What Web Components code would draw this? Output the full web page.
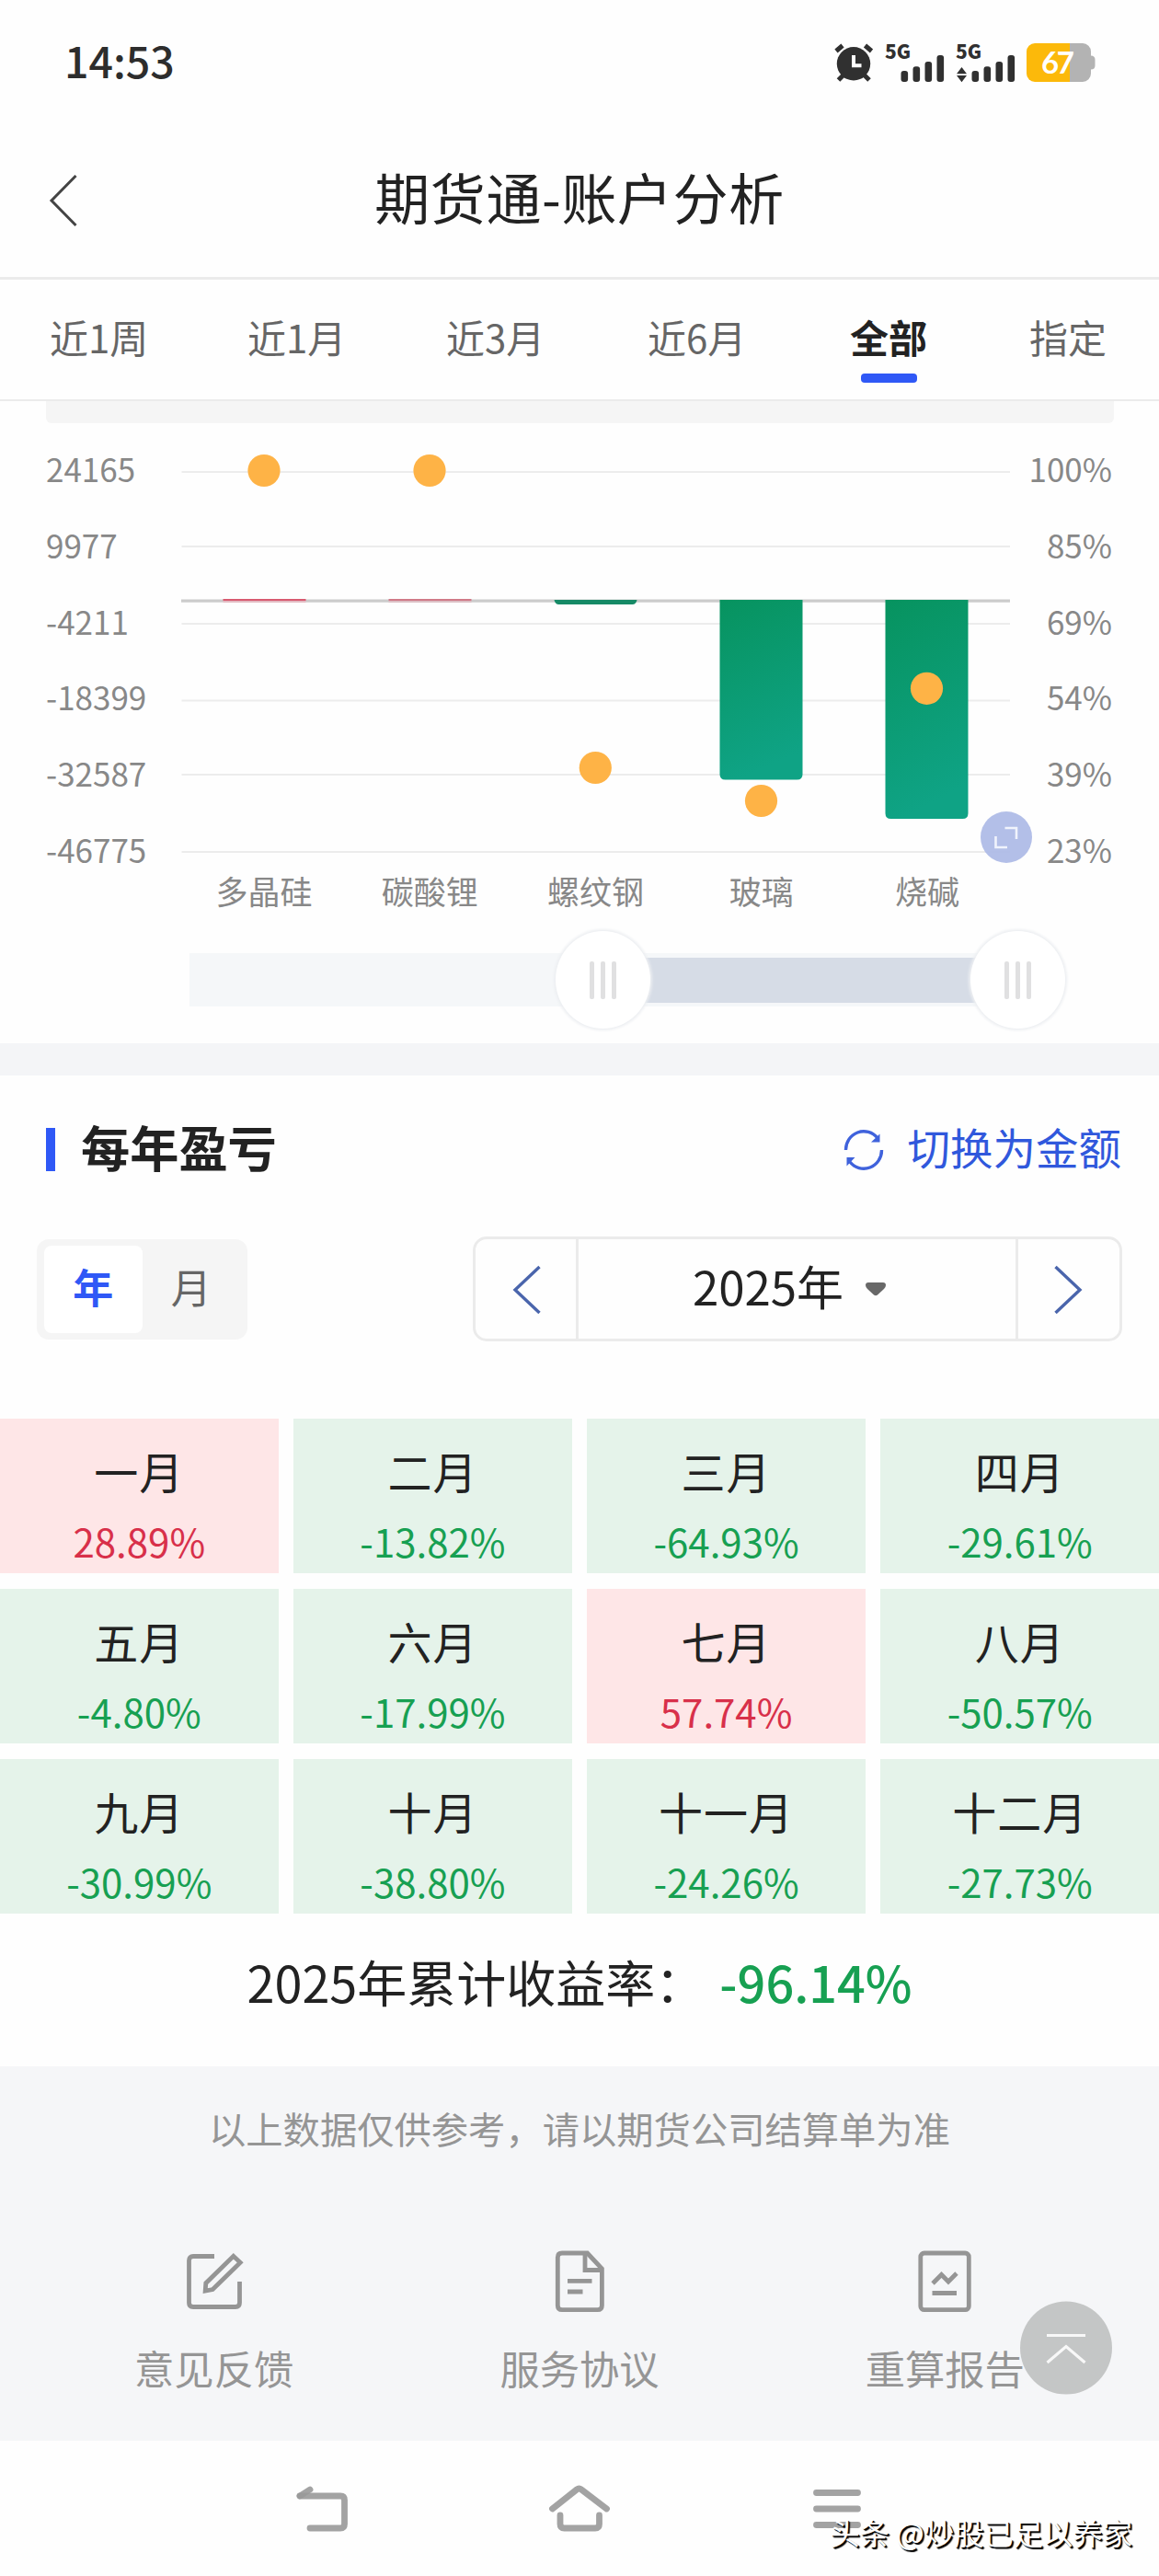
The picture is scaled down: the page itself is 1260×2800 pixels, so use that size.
<!DOCTYPE html>
<html lang="zh-CN">
<head>
<meta charset="UTF-8">
<title>期货通-账户分析</title>
<style>
  body {
    margin: 0;
    width: 1260px;
    background: #fefefe;
    color: #222;
    font-family: "Noto Sans CJK SC", sans-serif;
  }
</style>
</head>
<body>
<status-bar time="14:53"></status-bar>
<page-header>期货通-账户分析</page-header>
<range-tabs items="近1周,近1月,近3月,近6月,全部,指定" active="全部"></range-tabs>
<profit-chart></profit-chart>
<section-title action="切换为金额">每年盈亏</section-title>
<period-picker year="2025年"></period-picker>
<month-grid></month-grid>
<year-total value="-96.14%">2025年累计收益率：</year-total>
<page-footer>以上数据仅供参考，请以期货公司结算单为准</page-footer>
<nav-bar>头条 @炒股已足以养家</nav-bar>

<script>
class StatusBar extends HTMLElement {
  connectedCallback() {
    this.attachShadow({ mode: 'open' });
    this.shadowRoot.innerHTML = `
      <style>
        :host {
          display: flex;
          justify-content: space-between;
          align-items: center;
          height: 134px;
          padding: 0 65px 0 70px;
        }
        .time {
          font-size: 46.500px;
          font-weight: 500;
          line-height: 60px;
          padding-bottom: 4px;
          color: #2d2d2d;
        }
        svg { display: block; margin-top: 4px; }
      </style>
      <span class="time">${this.getAttribute('time')}</span>
      <svg width="290" height="70" viewBox="905 34 290 70" fill="#303030">
        <circle cx="928" cy="69.3" r="18.2"/>
        <path d="M909 55.5l7-6M947.5 55.5l-7-6M911.500 87l7-7M945 87l-7-7" stroke="#303030" stroke-width="5"/>
        <path d="M928 60v11.200h8.500" fill="none" stroke="#fff" stroke-width="4"/>
        <g font-family="Noto Sans CJK SC, sans-serif" font-weight="900" font-size="21">
          <text x="962" y="63.500">5G</text>
          <text x="1039" y="63.500">5G</text>
        </g>
        <g id="bars">
          <rect x="979.500" y="77" width="7.600" height="12" rx="3"/>
          <rect x="992.500" y="72.300" width="7.600" height="16.700" rx="3"/>
          <rect x="1005.500" y="67" width="7.600" height="22" rx="3"/>
          <rect x="1018.500" y="60" width="7.600" height="29" rx="3"/>
        </g>
        <use href="#bars" x="77"/>
        <path d="M1040 80.300h11l-5.500-7.300zM1040 82h11l-5.500 7.300z"/>
        <path d="M1163 47h14a9 9 0 0 1 9 9v4.500q4.500 0 4.500 4.500v6q0 4.500-4.500 4.500v4.500a9 9 0 0 1-9 9h-14z" fill="#b3b3b3"/>
        <path d="M1163 47h-38a9 9 0 0 0-9 9v24a9 9 0 0 0 9 9h38z" fill="#fcb90a"/>
        <text x="1132" y="80" font-family="Lato, sans-serif" font-weight="700" font-size="33" textLength="36" fill="#fff">67</text>
      </svg>
    `;
  }
}

class PageHeader extends HTMLElement {
  connectedCallback() {
    this.attachShadow({ mode: 'open' });
    this.shadowRoot.innerHTML = `
      <style>
        :host {
          display: grid;
          grid-template-columns: 100px 1fr 100px;
          align-items: center;
          height: 167px;
          border-bottom: 3px solid #ebebeb;
        }
        svg { margin-left: 50px; }
        h1 {
          margin: 0;
          padding-bottom: 9px;
          text-align: center;
          font-size: 60px;
          font-weight: 400;
          letter-spacing: .6px;
          line-height: 80px;
        }
      </style>
      <svg width="40" height="60" fill="none" stroke="#444" stroke-width="3"><path d="M32.500 3L6 30l26.500 27"/></svg>
      <h1><slot></slot></h1>
    `;
  }
}

class RangeTabs extends HTMLElement {
  connectedCallback() {
    const active = this.getAttribute('active');
    const items = this.getAttribute('items').split(',');
    this.attachShadow({ mode: 'open' });
    this.shadowRoot.innerHTML = `
      <style>
        :host {
          display: grid;
          grid-template-columns: 215px 216px 219px 220px 195px auto;
          justify-items: start;
          height: 130px;
          padding-left: 54px;
          border-bottom: 2px solid #ebebeb;
        }
        .tab {
          display: flex;
          flex-direction: column;
          align-items: center;
          font-size: 42px;
          line-height: 60px;
          padding-top: 32px;
          color: #666;
        }
        .tab.active { color: #222; font-weight: 700; }
        .tab.active::after {
          content: "";
          width: 61px;
          height: 10px;
          margin-top: 10px;
          border-radius: 4px;
          background: #2f58f6;
        }
      </style>
      ${items.map(t => `<span class="tab ${t === active ? 'active' : ''}">${t}</span>`).join('')}
    `;
  }
}

class ProfitChart extends HTMLElement {
  connectedCallback() {
    const left = ['24165', '9977', '-4211', '-18399', '-32587', '-46775'];
    const right = ['100%', '85%', '69%', '54%', '39%', '23%'];
    const names = ['多晶硅', '碳酸锂', '螺纹钢', '玻璃', '烧碱'];
    const lines = [21, 102, 186, 269.5, 350, 434];
    const dots = [[90, 19.5], [270, 19.5], [450.3, 342.5], [630.5, 378.5], [810.500, 256.3]];
    this.attachShadow({ mode: 'open' });
    this.shadowRoot.innerHTML = `
      <style>
        :host {
          display: block;
          position: relative;
          height: 698px;
          border-bottom: 35px solid #f4f5f7;
          color: #888;
          font-size: 35px;
        }
        .band {
          height: 24px;
          margin: 0 49px 0 50px;
          background: #f5f5f5;
          border-radius: 0 0 6px 6px;
        }
        .plot {
          display: grid;
          grid-template-columns: 147px 901px 111px;
          height: 454px;
          margin: 32px 0 0 50px;
        }
        .axis {
          display: flex;
          flex-direction: column;
          justify-content: space-between;
          line-height: 40px;
          margin: -3px 0 3px;
        }
        .axis.right { text-align: right; }
        .names {
          display: grid;
          grid-template-columns: repeat(5, 1fr);
          width: 901px;
          margin-left: 197px;
          text-align: center;
          line-height: 44px;
        }
        .zoom {
          display: flex;
          align-items: center;
          position: relative;
          width: 900px;
          height: 58px;
          margin: 46px 0 0 206px;
          background: #f5f7f9;
        }
        .selected {
          width: 451px;
          height: 49px;
          margin-left: 449px;
          background: #d6dce6;
        }
        .handle {
          position: absolute;
          top: -24px;
          display: flex;
          justify-content: center;
          align-items: center;
          gap: 7px;
          width: 103px;
          height: 106px;
          border-radius: 50%;
          background: #fff;
          box-shadow: 0 0 3px 2px #edeff2;
        }
        .handle i { width: 5px; height: 41px; border-radius: 2px; background: #e0e0e1; }
        .expand {
          position: absolute;
          left: 1066px;
          top: 446px;
        }
      </style>
      <div class="band"></div>
      <div class="plot">
        <div class="axis">${left.map(t => `<span>${t}</span>`).join('')}</div>
        <svg width="901" height="454">
          <defs>
            <linearGradient id="down" x1="0" y1="0" x2="0.2" y2="1">
              <stop offset="0" stop-color="#07935f"/>
              <stop offset="1" stop-color="#0fa385"/>
            </linearGradient>
          </defs>
          ${lines.map(y => `<path d="M0.500 ${y}H901" stroke="#ececec" stroke-width="1.8"/>`).join('')}
          <path d="M0 161.200H901" stroke="#ccc" stroke-width="3.2"/>
          <rect x="45.500" y="159" width="90" height="2" fill="#d85a70"/>
          <rect x="225.500" y="159" width="90" height="2" fill="#d07a88"/>
          <rect x="45.500" y="161" width="90" height="2" fill="#e3bcc3"/>
          <rect x="225.500" y="161" width="90" height="2" fill="#dcc0c5"/>
          <path d="M405.500 160h90q-1 5-5 5h-80q-4 0-5-5z" fill="#168a66"/>
          <path d="M585.500 160h90v189.500q0 6-6 6h-78q-6 0-6-6z" fill="url(#down)"/>
          <path d="M765.500 160h90v232q0 6-6 6h-78q-6 0-6-6z" fill="url(#down)"/>
          ${dots.map(d => `<circle cx="${d[0]}" cy="${d[1]}" r="17.600" fill="#feb346"/>`).join('')}
        </svg>
        <div class="axis right">${right.map(t => `<span>${t}</span>`).join('')}</div>
      </div>
      <div class="names">${names.map(t => `<span>${t}</span>`).join('')}</div>
      <div class="zoom">
        <div class="selected"></div>
        <div class="handle" style="left: 398px"><i></i><i></i><i></i></div>
        <div class="handle" style="left: 849px"><i></i><i></i><i></i></div>
      </div>
      <svg class="expand" width="56" height="56">
        <circle cx="28" cy="28" r="28" fill="#adbae6" opacity=".92"/>
        <path d="M26.500 18H39v12M16.500 27v12H29" fill="none" stroke="#f0f3fc" stroke-width="2.600"/>
      </svg>
    `;
  }
}

class SectionTitle extends HTMLElement {
  connectedCallback() {
    this.attachShadow({ mode: 'open' });
    this.shadowRoot.innerHTML = `
      <style>
        :host {
          display: flex;
          align-items: center;
          height: 161px;
          padding: 0 41px 0 50px;
        }
        .mark { width: 10px; height: 47px; background: #2f58f6; }
        h2 {
          flex: 1;
          margin: 0 0 0 28px;
          padding-bottom: 8px;
          font-size: 53.200px;
          line-height: 70px;
        }
        .action {
          padding-bottom: 8px;
          margin-left: 25px;
          font-size: 46.500px;
          line-height: 60px;
          color: #3058dc;
        }
      </style>
      <span class="mark"></span>
      <h2><slot></slot></h2>
      <svg width="46" height="48" viewBox="915 1226 46 48" fill="none" stroke="#3f62dc" stroke-width="3.400">
        <path d="M918.500 1250A19.500 20 0 0 1 953 1237M957.500 1250A19.500 20 0 0 1 923 1263"/>
        <path d="M955.500 1232.500v9h-9.500zM919.500 1267.500v-9.500h9z" fill="#3f62dc" stroke="none"/>
      </svg>
      <span class="action">${this.getAttribute('action')}</span>
    `;
  }
}

class PeriodPicker extends HTMLElement {
  connectedCallback() {
    this.attachShadow({ mode: 'open' });
    this.shadowRoot.innerHTML = `
      <style>
        :host {
          display: flex;
          justify-content: space-between;
          align-items: center;
          height: 114px;
          padding: 14px 40px 84px;
        }
        .toggle {
          display: flex;
          box-sizing: border-box;
          width: 229px;
          height: 109px;
          padding: 7px 8px;
          border-radius: 13px;
          background: #f5f5f5;
          font-size: 44px;
          line-height: 88px;
          text-align: center;
          color: #666;
        }
        .toggle span { flex: 1; }
        .toggle .on {
          background: #fff;
          border-radius: 8px;
          font-weight: 700;
          color: #2f58f6;
        }
        .picker {
          display: grid;
          grid-template-columns: 109px 1fr 110px;
          box-sizing: border-box;
          width: 706px;
          height: 114px;
          border: 3px solid #ebebeb;
          border-radius: 15px;
        }
        .picker > * {
          display: flex;
          justify-content: center;
          align-items: center;
        }
        .year {
          gap: 24px;
          padding-right: 17px;
          border: solid #ebebeb;
          border-width: 0 3px;
          font-size: 51px;
        }
        .year span { line-height: 60px; padding-bottom: 8px; }
        .arrow svg { fill: none; stroke: #4a65ac; stroke-width: 3.400; }
      </style>
      <div class="toggle"><span class="on">年</span><span>月</span></div>
      <div class="picker">
        <div class="arrow"><svg width="32" height="54"><path d="M30.500 3L4 28l26.500 25"/></svg></div>
        <div class="year">
          <span>${this.getAttribute('year')}</span>
          <svg width="22" height="16"><path d="M3 1h16q3 0 3 3 0 2-2 4l-7 6.500q-2 1.500-4 0L2 8Q0 6 0 4q0-3 3-3z" fill="#686868"/></svg>
        </div>
        <div class="arrow"><svg width="32" height="54"><path d="M1.500 3L28 28 1.500 53"/></svg></div>
      </div>
    `;
  }
}

class MonthGrid extends HTMLElement {
  connectedCallback() {
    const months = [
      ['一月', '28.89%'], ['二月', '-13.82%'], ['三月', '-64.93%'], ['四月', '-29.61%'],
      ['五月', '-4.80%'], ['六月', '-17.99%'], ['七月', '57.74%'], ['八月', '-50.57%'],
      ['九月', '-30.99%'], ['十月', '-38.80%'], ['十一月', '-24.26%'], ['十二月', '-27.73%']
    ];
    this.attachShadow({ mode: 'open' });
    this.shadowRoot.innerHTML = `
      <style>
        :host {
          display: grid;
          grid-template-columns: repeat(4, 1fr);
          grid-auto-rows: 168px;
          gap: 17px 16.600px;
        }
        .cell {
          display: flex;
          flex-direction: column;
          align-items: center;
          background: #fee6e7;
          color: #d8304a;
        }
        .cell.down { background: #e5f3ea; color: #17a052; }
        .name {
          padding-top: 21px;
          font-size: 48px;
          letter-spacing: 1px;
          line-height: 70px;
          color: #222;
        }
        .rate {
          padding-top: 12px;
          font-size: 42px;
          line-height: 60px;
        }
      </style>
      ${months.map(([name, rate]) => `
        <div class="cell ${rate[0] === '-' ? 'down' : ''}">
          <span class="name">${name}</span>
          <span class="rate">${rate}</span>
        </div>`).join('')}
    `;
  }
}

class YearTotal extends HTMLElement {
  connectedCallback() {
    this.attachShadow({ mode: 'open' });
    this.shadowRoot.innerHTML = `
      <style>
        :host {
          display: flex;
          justify-content: center;
          gap: 16px;
          height: 127px;
          padding-top: 39px;
          font-size: 54px;
          line-height: 70px;
        }
        b { font-weight: 500; color: #17a052; }
      </style>
      <span><slot></slot></span><b>${this.getAttribute('value')}</b>
    `;
  }
}

class PageFooter extends HTMLElement {
  connectedCallback() {
    this.attachShadow({ mode: 'open' });
    this.shadowRoot.innerHTML = `
      <style>
        :host {
          display: block;
          position: relative;
          height: 407px;
          background: #f5f6f8;
          color: #959595;
        }
        p {
          margin: 0;
          padding-top: 37px;
          text-align: center;
          font-size: 40.300px;
          line-height: 60px;
        }
        .links {
          display: grid;
          grid-template-columns: repeat(3, 1fr);
          margin: 97px 34px 0;
        }
        .link {
          display: flex;
          flex-direction: column;
          align-items: center;
          gap: 23px;
          font-size: 43.300px;
          line-height: 60px;
        }
        .link svg { fill: none; stroke: #959595; stroke-width: 4.800; }
        .top {
          position: absolute;
          left: 1109px;
          top: 255px;
        }
      </style>
      <p><slot></slot></p>
      <div class="links">
        <div class="link">
          <svg width="70" height="80">
            <path d="M35 12.500H12q-4.500 0-4.500 4.500V63q0 4.500 4.500 4.500h46q4.500 0 4.500-4.500V40"/>
            <path d="M25.200 50l.6-8.300L55.800 12.300l7.400 7L33.200 48.500z"/>
          </svg>
          意见反馈
        </div>
        <div class="link">
          <svg width="70" height="80">
            <path d="M43.500 9H16q-4.700 0-4.700 4.700V66q0 4.700 4.700 4.700h38.700q4.700 0 4.700-4.700V26z"/>
            <path d="M41 9v18.500H59.500M22 39.300h26.500M22 51h16.500"/>
          </svg>
          服务协议
        </div>
        <div class="link">
          <svg width="70" height="80">
            <rect x="8.800" y="9" width="52.500" height="61.700" rx="4"/>
            <path d="M22 42l9.500-9.500 7.500 7.500 9-9M21.500 52.500H48"/>
          </svg>
          重算报告
        </div>
      </div>
      <svg class="top" width="100" height="102" viewBox="0 0 100 102">
        <ellipse cx="50" cy="51" rx="50" ry="50.500" fill="#c4c6c6"/>
        <path d="M29 37.500h42M29.500 67L50 49.500 70.500 67" fill="none" stroke="#f8f8f8" stroke-width="3.200"/>
      </svg>
    `;
  }
}

class NavBar extends HTMLElement {
  connectedCallback() {
    this.attachShadow({ mode: 'open' });
    this.shadowRoot.innerHTML = `
      <style>
        :host {
          display: flex;
          justify-content: center;
          position: relative;
          gap: 216px;
          height: 147px;
        }
        svg {
          margin-top: 44px;
          fill: none;
          stroke: #999;
          stroke-width: 6.800;
          stroke-linecap: round;
          stroke-linejoin: round;
        }
        path { opacity: .9; }
        .mark {
          position: absolute;
          right: 29px;
          top: 76px;
          font-size: 32.300px;
          line-height: 46px;
          color: #fff;
          text-shadow: 2px 2px 1px #000, 1px 1px 0 #000;
        }
      </style>
      <svg width="64" height="60" viewBox="318 2697 64 60">
        <path d="M326 2713H370q4.500 0 4.500 4.500V2743.500q0 4.500-4.500 4.500H337"/>
        <path d="M326 2713L337 2706"/>
      </svg>
      <svg width="64" height="60" viewBox="598 2697 64 60" overflow="visible">
        <path d="M600.500 2727L627 2706q2.500-2 5 0L659.500 2727"/>
        <path d="M609 2734v9.500q0 4.500 4.500 4.500H647q4.500 0 4.500-4.500V2734"/>
      </svg>
      <svg width="64" height="60" viewBox="878 2697 64 60">
        <path d="M887.500 2709.500H932.500M887.500 2727H932.500M887.500 2744.500H932.500"/>
      </svg>
      <span class="mark"><slot></slot></span>
    `;
  }
}

customElements.define('status-bar', StatusBar);
customElements.define('page-header', PageHeader);
customElements.define('range-tabs', RangeTabs);
customElements.define('profit-chart', ProfitChart);
customElements.define('section-title', SectionTitle);
customElements.define('period-picker', PeriodPicker);
customElements.define('month-grid', MonthGrid);
customElements.define('year-total', YearTotal);
customElements.define('page-footer', PageFooter);
customElements.define('nav-bar', NavBar);
</script>
</body>
</html>
